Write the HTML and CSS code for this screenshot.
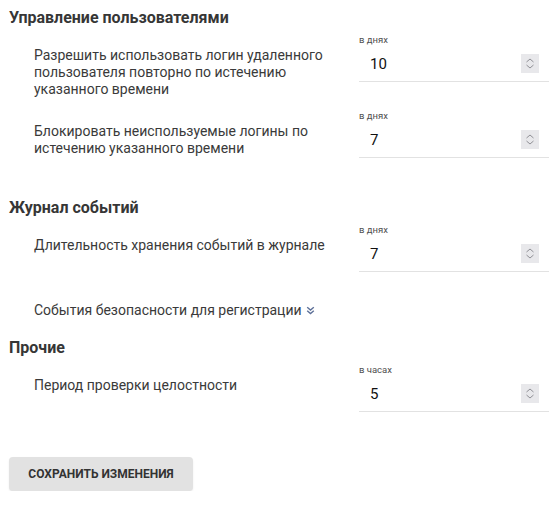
FILE: index.html
```html
<!DOCTYPE html>
<html lang="ru">
<head>
<meta charset="utf-8">
<title>Настройки</title>
<link rel="stylesheet" href="styles.css">
</head>
<body>
<div class="page">
  <section class="section section-users">
    <h2 class="section-title">Управление пользователями</h2>
    <div class="rows">
      <div class="row">
        <div class="row-label">Разрешить использовать логин удаленного пользователя повторно по истечению указанного времени</div>
        <div class="field">
          <div class="field-caption">в днях</div>
          <div class="field-input">
            <span class="field-value">10</span>
            <span class="spinner"><svg width="18" height="19" viewBox="0 0 18 19"><polyline points="5.5,8 9,5 12.5,8" /><polyline points="5.5,11 9,14 12.5,11" /></svg></span>
          </div>
        </div>
      </div>
      <div class="row">
        <div class="row-label">Блокировать неиспользуемые логины по истечению указанного времени</div>
        <div class="field">
          <div class="field-caption">в днях</div>
          <div class="field-input">
            <span class="field-value">7</span>
            <span class="spinner"><svg width="18" height="19" viewBox="0 0 18 19"><polyline points="5.5,8 9,5 12.5,8" /><polyline points="5.5,11 9,14 12.5,11" /></svg></span>
          </div>
        </div>
      </div>
    </div>
  </section>

  <section class="section section-journal">
    <h2 class="section-title">Журнал событий</h2>
    <div class="rows">
      <div class="row">
        <div class="row-label">Длительность хранения событий в журнале</div>
        <div class="field">
          <div class="field-caption">в днях</div>
          <div class="field-input">
            <span class="field-value">7</span>
            <span class="spinner"><svg width="18" height="19" viewBox="0 0 18 19"><polyline points="5.5,8 9,5 12.5,8" /><polyline points="5.5,11 9,14 12.5,11" /></svg></span>
          </div>
        </div>
      </div>
    </div>
    <div class="expand-row">
      <span>События безопасности для регистрации</span>
      <svg class="expand-icon" width="9" height="9" viewBox="0 0 9 9"><polyline points="1.2,1.2 4.5,4 7.8,1.2" /><polyline points="1.2,4.8 4.5,7.6 7.8,4.8" /></svg>
    </div>
  </section>

  <section class="section section-other">
    <h2 class="section-title">Прочие</h2>
    <div class="rows">
      <div class="row">
        <div class="row-label">Период проверки целостности</div>
        <div class="field">
          <div class="field-caption">в часах</div>
          <div class="field-input">
            <span class="field-value">5</span>
            <span class="spinner"><svg width="18" height="19" viewBox="0 0 18 19"><polyline points="5.5,8 9,5 12.5,8" /><polyline points="5.5,11 9,14 12.5,11" /></svg></span>
          </div>
        </div>
      </div>
    </div>
  </section>

  <div class="actions">
    <button class="save-button" type="button">Сохранить изменения</button>
  </div>
</div>
</body>
</html>
```

FILE: styles.css
```css
html, body {
  margin: 0;
  padding: 0;
  background: #ffffff;
}

body {
  font-family: Roboto, "Noto Sans", "Liberation Sans", sans-serif;
  color: #333333;
}

.page {
  padding: 8px 9px 0 9px;
  box-sizing: border-box;
  width: 558px;
}

.section-title {
  margin: 0 0 6px 0;
  font-size: 16px;
  line-height: 20px;
  font-weight: 700;
  color: #363636;
}

.section-users {
  margin-bottom: 40px;
}

.section-journal {
  margin-bottom: 19px;
}

.rows {
  display: flex;
  flex-direction: column;
  gap: 12px;
}

.row {
  display: flex;
  align-items: flex-start;
}

.row-label {
  flex: 1;
  padding: 13px 24px 0 25px;
  font-size: 14px;
  line-height: 17px;
  color: #3a3a3a;
}

.field {
  width: 190px;
  flex: none;
}

.field-caption {
  font-size: 9.5px;
  line-height: 12px;
  color: #4f4f4f;
}

.field-input {
  height: 35px;
  display: flex;
  align-items: center;
  justify-content: space-between;
  padding: 0 10px 0 11px;
  border-bottom: 1px solid #e2e2e2;
}

.field-value {
  font-size: 15px;
  color: #111111;
}

.spinner {
  display: block;
  width: 18px;
  height: 19px;
  background: #e8e8eb;
}

.spinner svg {
  display: block;
  fill: none;
  stroke: #909096;
  stroke-width: 1;
}

.expand-row {
  margin-top: 30px;
  padding-left: 25px;
  font-size: 14px;
  line-height: 17px;
  color: #3a3a3a;
  display: flex;
  align-items: center;
  gap: 4px;
}

.expand-icon {
  display: block;
  fill: none;
  stroke: #5d7098;
  stroke-width: 1.4;
  margin-top: -1px;
}

.actions {
  margin-top: 45px;
}

.save-button {
  width: 184px;
  height: 34px;
  border: none;
  border-radius: 4px;
  background: #e2e2e2;
  box-shadow: 0 1px 2px rgba(0, 0, 0, 0.08);
  font-family: Roboto, "Noto Sans", "Liberation Sans", sans-serif;
  font-size: 12px;
  font-weight: 700;
  text-transform: uppercase;
  color: #333333;
  padding: 0;
  cursor: pointer;
}
```
